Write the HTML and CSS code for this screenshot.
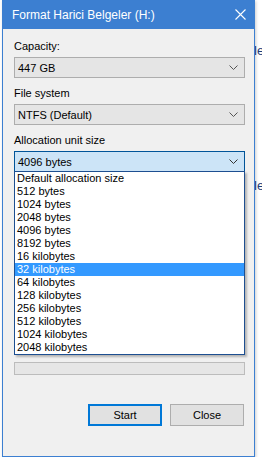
FILE: index.html
```html
<!DOCTYPE html>
<html lang="tr">
<head>
<meta charset="UTF-8">
<meta name="viewport" content="width=device-width, initial-scale=1.0">
<title>Format Harici Belgeler (H:)</title>
<link rel="stylesheet" href="styles.css">
</head>
<body>

<span class="behind behind-top">le</span>
<span class="behind behind-mid">le</span>

<div class="window">
  <div class="titlebar">
    <span class="title">Format Harici Belgeler (H:)</span>
    <svg class="close-icon" width="11" height="11" viewBox="0 0 11 11">
      <path d="M0.5 0.5 L10.5 10.5 M10.5 0.5 L0.5 10.5" stroke="#fff" stroke-width="1.1" fill="none"/>
    </svg>
  </div>

  <div class="content">
    <div class="field-label">Capacity:</div>
    <div class="combo">
      <span>447 GB</span>
      <svg class="chevron" width="9" height="5" viewBox="0 0 9 5"><path d="M0.5 0.5 L4.5 4.5 L8.5 0.5" stroke="#555" fill="none"/></svg>
    </div>

    <div class="field-label">File system</div>
    <div class="combo">
      <span>NTFS (Default)</span>
      <svg class="chevron" width="9" height="5" viewBox="0 0 9 5"><path d="M0.5 0.5 L4.5 4.5 L8.5 0.5" stroke="#555" fill="none"/></svg>
    </div>

    <div class="field-label">Allocation unit size</div>
    <div class="combo-wrap">
      <div class="combo combo-open">
        <span>4096 bytes</span>
        <svg class="chevron" width="9" height="5" viewBox="0 0 9 5"><path d="M0.5 0.5 L4.5 4.5 L8.5 0.5" stroke="#333" fill="none"/></svg>
      </div>
      <ul class="dropdown">
        <li>Default allocation size</li>
        <li>512 bytes</li>
        <li>1024 bytes</li>
        <li>2048 bytes</li>
        <li>4096 bytes</li>
        <li>8192 bytes</li>
        <li>16 kilobytes</li>
        <li class="selected">32 kilobytes</li>
        <li>64 kilobytes</li>
        <li>128 kilobytes</li>
        <li>256 kilobytes</li>
        <li>512 kilobytes</li>
        <li>1024 kilobytes</li>
        <li>2048 kilobytes</li>
      </ul>
    </div>

    <!-- the rest of the options sit under the open list -->
    <div class="covered"></div>

    <div class="progress"></div>

    <div class="buttons">
      <button class="btn btn-default">Start</button>
      <button class="btn">Close</button>
    </div>
  </div>
</div>

</body>
</html>
```

FILE: styles.css
```css
body {
  margin: 0;
  background-color: #fff;
  font-family: "Liberation Sans", Arial, sans-serif;
  font-size: 11px;
  color: #000;
  overflow: hidden;
}
.behind {
  position: absolute;
  left: 254px;
  color: #1e3c78;
  font-size: 13px;
  z-index: 0;
}
.behind-top {
  top: 43px;
}
.behind-mid {
  top: 178px;
}
.window {
  position: relative;
  z-index: 1;
  width: 253px;
  margin-left: 2px;
  box-sizing: border-box;
  border: 1px solid #3c7fd1;
  border-top: none;
  background-color: #f0f0f0;
  box-shadow: 1px 1px 3px rgba(0, 0, 0, 0.2);
}
.titlebar {
  height: 29px;
  background-color: #3c7fd1;
  display: flex;
  align-items: center;
  justify-content: space-between;
  padding: 0 8px 0 9px;
}
.title {
  color: #fff;
  font-size: 12px;
}
.close-icon {
  display: block;
}
.content {
  padding: 10px 9px 30px 11px;
}
.field-label {
  line-height: 15px;
  margin-bottom: 3px;
}
.combo {
  height: 21px;
  box-sizing: border-box;
  border: 1px solid #adadad;
  background-color: #e5e5e5;
  display: flex;
  align-items: center;
  justify-content: space-between;
  padding: 0 6px 0 3px;
  margin-bottom: 8px;
}
.combo-wrap {
  position: relative;
}
.combo-open {
  background-color: #cce4f7;
  border-color: #005499;
  margin-bottom: 0;
}
.dropdown {
  position: absolute;
  z-index: 5;
  top: 20px;
  left: 0;
  right: 0;
  margin: 0;
  padding: 0;
  list-style: none;
  background-color: #fff;
  border: 1px solid #1d4f91;
  box-shadow: 2px 2px 2px rgba(0, 0, 0, 0.25);
}
.dropdown li {
  height: 13px;
  line-height: 13px;
  padding-left: 2px;
  white-space: nowrap;
}
.dropdown li.selected {
  background-color: #3399ff;
  color: #fff;
}
.covered {
  height: 190px;
}
.progress {
  height: 13px;
  box-sizing: border-box;
  border: 1px solid #bcbcbc;
  background-color: #e6e6e6;
}
.buttons {
  display: flex;
  justify-content: flex-end;
  gap: 8px;
  margin-top: 29px;
  padding-right: 1px;
}
.btn {
  width: 74px;
  height: 22px;
  box-sizing: border-box;
  border: 1px solid #adadad;
  background-color: #e1e1e1;
  font: inherit;
  color: #000;
  padding: 0;
}
.btn-default {
  border: 2px solid #0078d7;
}
```
